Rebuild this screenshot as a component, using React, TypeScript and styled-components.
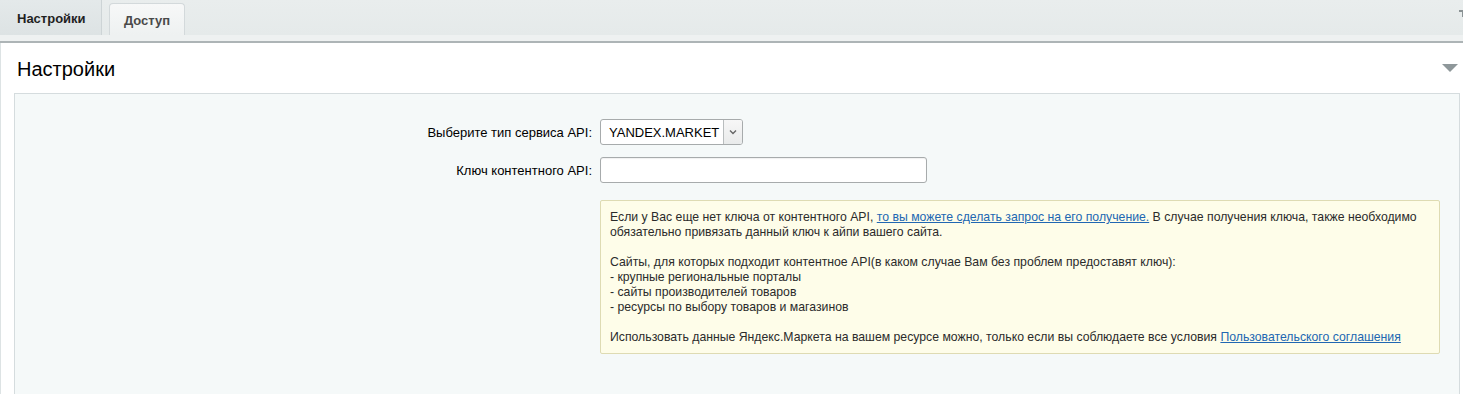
import React from "react";
import styled, { createGlobalStyle } from "styled-components";

const GlobalStyle = createGlobalStyle`
  html, body {
    margin: 0;
    padding: 0;
    background: #ffffff;
    overflow: hidden;
  }
  body {
    font-family: "Liberation Sans", Arial, sans-serif;
    color: #000;
  }
`;

const Page = styled.div`
  width: 1463px;
  height: 394px;
  overflow: hidden;
`;

const TabBar = styled.div`
  display: flex;
  align-items: stretch;
  height: 35px;
  background: linear-gradient(#e9eded, #e5eaea);
  overflow: hidden;
`;

const TabStrip = styled.div`
  height: 6px;
  background: #eef1f1;
  border-bottom: 2px solid #adb4b6;
`;

const Tab = styled.div<{ $active?: boolean }>`
  display: flex;
  align-items: center;
  font-size: 13px;
  font-weight: bold;
  box-sizing: border-box;
  ${(p) =>
    p.$active
      ? `
    width: 102px;
    padding: 2px 0 0 17px;
    color: #1f1f1f;
    background: linear-gradient(#e4e9ea, #dde3e4);
    border-right: 1px solid #cdd4d6;
  `
      : `
    margin: 3px 0 0 7px;
    width: 76px;
    justify-content: center;
    color: #4a4a4a;
    background: linear-gradient(#f7f8f8, #eef1f1);
    border: 1px solid #d3d9db;
    border-bottom: none;
    border-radius: 4px 4px 0 0;
    padding-top: 1px;
  `}
`;

const Pin = styled.svg`
  margin-left: auto;
  margin-right: -9px;
  margin-top: 9px;
  flex: none;
`;

const Panel = styled.div`
  background: #fff;
  border-left: 1px solid #dde3e4;
  padding: 0 3px 0 13px;
`;

const TitleRow = styled.div`
  display: flex;
  align-items: center;
  justify-content: space-between;
  height: 50px;
  padding-left: 3px;
`;

const Title = styled.h2`
  margin: 0;
  font-size: 20px;
  font-weight: normal;
  color: #000;
  padding-top: 2px;
`;

const Collapse = styled.svg`
  margin-right: 2px;
  margin-top: 1px;
`;

const Body = styled.div`
  background: #f5f9f9;
  border: 1px solid #d5dcde;
  padding: 25px 0 45px;
`;

const FormGrid = styled.div`
  display: grid;
  grid-template-columns: 585px 1fr;
  row-gap: 12px;
  align-items: center;
`;

const Label = styled.label`
  font-size: 13px;
  color: #000;
  text-align: right;
  padding-right: 8px;
  padding-top: 1px;
`;

const Select = styled.div`
  display: flex;
  width: 143px;
  height: 26px;
  box-sizing: border-box;
  border: 1px solid #a7abac;
  border-radius: 3px;
  background: #fff;
  overflow: hidden;
`;

const SelectValue = styled.span`
  flex: 1;
  display: flex;
  align-items: center;
  padding-left: 8px;
  font-size: 13px;
  color: #000;
`;

const SelectButton = styled.span`
  width: 18px;
  display: flex;
  align-items: center;
  justify-content: center;
  border-left: 1px solid #b9bdbe;
  background: linear-gradient(#f7f7f7, #e9ebeb);
`;

const TextInput = styled.input`
  width: 327px;
  height: 26px;
  box-sizing: border-box;
  border: 1px solid #a7abac;
  border-radius: 3px;
  background: #fff;
  box-shadow: inset 0 1px 1px rgba(0, 0, 0, 0.06);
  font: 13px "Liberation Sans", Arial, sans-serif;
  padding: 0 6px;
  outline: none;
`;

const Notice = styled.div`
  grid-column: 2;
  margin-top: 5px;
  width: 840px;
  box-sizing: border-box;
  background: #fefde9;
  border: 1px solid #dedbb3;
  border-radius: 2px;
  padding: 9px 9px 8px;
  font-size: 12.25px;
  line-height: 15px;
  color: #2b2b2b;
`;

const Link = styled.a`
  color: #2167b2;
  text-decoration: underline;
  cursor: pointer;
`;

export default function App() {
  return (
    <Page>
      <GlobalStyle />
      <TabBar>
        <Tab $active>Настройки</Tab>
        <Tab>Доступ</Tab>
        <Pin width="14" height="14" viewBox="0 0 14 14">
          <rect x="1" y="1" width="12" height="2" fill="#8a9294" />
          <rect x="4" y="3" width="6" height="5" fill="#8a9294" />
          <rect x="6" y="8" width="2" height="6" fill="#8a9294" />
        </Pin>
      </TabBar>
      <TabStrip />
      <Panel>
        <TitleRow>
          <Title>Настройки</Title>
          <Collapse width="16" height="9" viewBox="0 0 16 9">
            <polygon points="0,0 16,0 8,8" fill="#8e979a" />
          </Collapse>
        </TitleRow>
        <Body>
          <FormGrid>
            <Label>Выберите тип сервиса API:</Label>
            <Select>
              <SelectValue>YANDEX.MARKET</SelectValue>
              <SelectButton>
                <svg width="8" height="6" viewBox="0 0 8 6">
                  <polyline points="1,1.5 4,4.5 7,1.5" fill="none" stroke="#666" strokeWidth="1.4" />
                </svg>
              </SelectButton>
            </Select>
            <Label>Ключ контентного API:</Label>
            <div>
              <TextInput type="text" />
            </div>
            <Notice>
              Если у Вас еще нет ключа от контентного API, <Link>то вы можете сделать запрос на его получение.</Link> В случае получения ключа, также необходимо обязательно привязать данный ключ к айпи вашего сайта.
              <br />
              <br />
              Сайты, для которых подходит контентное API(в каком случае Вам без проблем предоставят ключ):
              <br />- крупные региональные порталы
              <br />- сайты производителей товаров
              <br />- ресурсы по выбору товаров и магазинов
              <br />
              <br />
              Использовать данные Яндекс.Маркета на вашем ресурсе можно, только если вы соблюдаете все условия <Link>Пользовательского соглашения</Link>
            </Notice>
          </FormGrid>
        </Body>
      </Panel>
    </Page>
  );
}
